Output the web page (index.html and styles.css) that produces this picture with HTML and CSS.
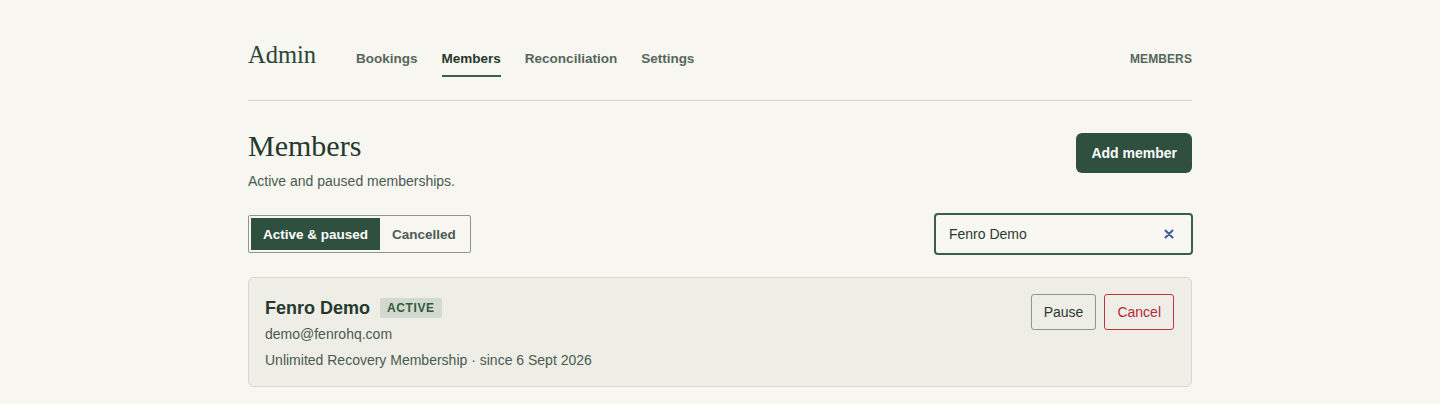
FILE: index.html
```html
<!DOCTYPE html>
<html lang="en">
<head>
<meta charset="utf-8">
<title>Admin – Members</title>
<link rel="stylesheet" href="styles.css">
</head>
<body>
<div class="page">
  <header class="topbar">
    <div class="brand">Admin</div>
    <nav class="nav">
      <a class="nav-item">Bookings</a>
      <a class="nav-item active">Members</a>
      <a class="nav-item">Reconciliation</a>
      <a class="nav-item">Settings</a>
    </nav>
    <div class="section-label">MEMBERS</div>
  </header>

  <section class="head">
    <div>
      <h1 class="title">Members</h1>
      <p class="subtitle">Active and paused memberships.</p>
    </div>
    <button class="btn-primary">Add member</button>
  </section>

  <div class="toolbar">
    <div class="segmented">
      <button class="seg active">Active &amp; paused</button>
      <button class="seg">Cancelled</button>
    </div>
    <div class="search">
      <span class="search-text">Fenro Demo</span>
      <svg class="clear" width="10" height="10" viewBox="0 0 10 10" aria-hidden="true">
        <path d="M1.5 1.5 L8.5 8.5 M8.5 1.5 L1.5 8.5" stroke="#3d5a9e" stroke-width="2" stroke-linecap="round"/>
      </svg>
    </div>
  </div>

  <article class="card">
    <div class="card-info">
      <div class="name-row">
        <span class="name">Fenro Demo</span>
        <span class="badge">ACTIVE</span>
      </div>
      <div class="email">demo@fenrohq.com</div>
      <div class="meta">Unlimited Recovery Membership · since 6 Sept 2026</div>
    </div>
    <div class="card-actions">
      <button class="btn-outline">Pause</button>
      <button class="btn-danger">Cancel</button>
    </div>
  </article>
</div>
</body>
</html>
```

FILE: styles.css
```css
* { box-sizing: border-box; }
html, body { margin: 0; padding: 0; }
body {
  background: #f7f6f1;
  font-family: "Liberation Sans", Arial, sans-serif;
  color: #2c3e33;
}
.page {
  width: 944px;
  margin: 0 auto;
}
.topbar {
  display: flex;
  align-items: baseline;
  height: 101px;
  padding-top: 40px;
  border-bottom: 1px solid #d4d8cb;
}
.brand {
  font-family: "Liberation Serif", "Times New Roman", serif;
  font-size: 24.5px;
  line-height: 30px;
  color: #2a4436;
  margin-right: 40px;
}
.nav {
  display: flex;
  align-items: baseline;
  gap: 24px;
  flex: 1;
}
.nav-item {
  display: block;
  font-size: 13.5px;
  line-height: 16px;
  font-weight: 700;
  color: #56665b;
  padding-bottom: 8px;
  border-bottom: 2px solid transparent;
}
.nav-item.active {
  color: #25392d;
  border-bottom-color: #3a6150;
}
.section-label {
  font-size: 12px;
  font-weight: 700;
  letter-spacing: 0.1px;
  color: #56665b;
}
.head {
  display: flex;
  justify-content: space-between;
  align-items: flex-start;
  padding-top: 31px;
}
.title {
  margin: 0;
  font-family: "Liberation Serif", "Times New Roman", serif;
  font-weight: 400;
  font-size: 30px;
  line-height: 28px;
  color: #24392d;
}
.subtitle {
  margin: 13px 0 0;
  font-size: 14px;
  color: #4a5a50;
}
.btn-primary {
  margin-top: 1px;
  height: 40px;
  padding: 0 15px;
  border: none;
  border-radius: 6px;
  background: #2f4f3f;
  color: #fff;
  font-family: inherit;
  font-size: 14px;
  font-weight: 700;
}
.toolbar {
  display: flex;
  justify-content: space-between;
  align-items: center;
  margin-top: 24px;
}
.segmented {
  display: flex;
  padding: 2px;
  border: 1px solid #8e968f;
  border-radius: 2px;
  background: #f7f6f1;
}
.seg {
  height: 32px;
  padding: 0 12px;
  border: none;
  background: transparent;
  font-family: inherit;
  font-size: 13.5px;
  font-weight: 700;
  color: #4c5c52;
}
.seg.active {
  background: #2f4f3f;
  color: #fff;
}
.search {
  width: 259px;
  height: 42px;
  margin-right: -1px;
  display: flex;
  align-items: center;
  justify-content: space-between;
  padding: 0 17px 0 13px;
  border: 2px solid #3b5e4c;
  border-radius: 4px;
  background: #f8f7f2;
}
.search-text {
  font-size: 14px;
  color: #2b3a31;
}
.card {
  margin-top: 22px;
  display: flex;
  justify-content: space-between;
  align-items: flex-start;
  padding: 16px 17px 18px 16px;
  border: 1px solid #d5d8cc;
  border-radius: 6px;
  background: #eeeee7;
}
.name-row {
  display: flex;
  align-items: center;
  gap: 10px;
  height: 26px;
  margin-top: 1px;
}
.name {
  font-size: 18px;
  font-weight: 700;
  color: #25392d;
}
.badge {
  padding: 3px 7px;
  background: #d3dacd;
  color: #2f5a40;
  font-size: 12px;
  font-weight: 700;
  letter-spacing: 0.6px;
  border-radius: 2px;
}
.email {
  margin-top: 5px;
  font-size: 14px;
  color: #4a5a50;
}
.meta {
  margin-top: 10px;
  font-size: 14px;
  color: #4a5a50;
}
.card-actions {
  display: flex;
  gap: 8px;
}
.btn-outline, .btn-danger {
  height: 36px;
  padding: 0 12px;
  border-radius: 3px;
  background: transparent;
  font-family: inherit;
  font-size: 14px;
}
.btn-outline {
  border: 1px solid #8a9a8c;
  color: #2b3a31;
}
.btn-danger {
  border: 1px solid #c0343f;
  color: #b42a35;
}
```
